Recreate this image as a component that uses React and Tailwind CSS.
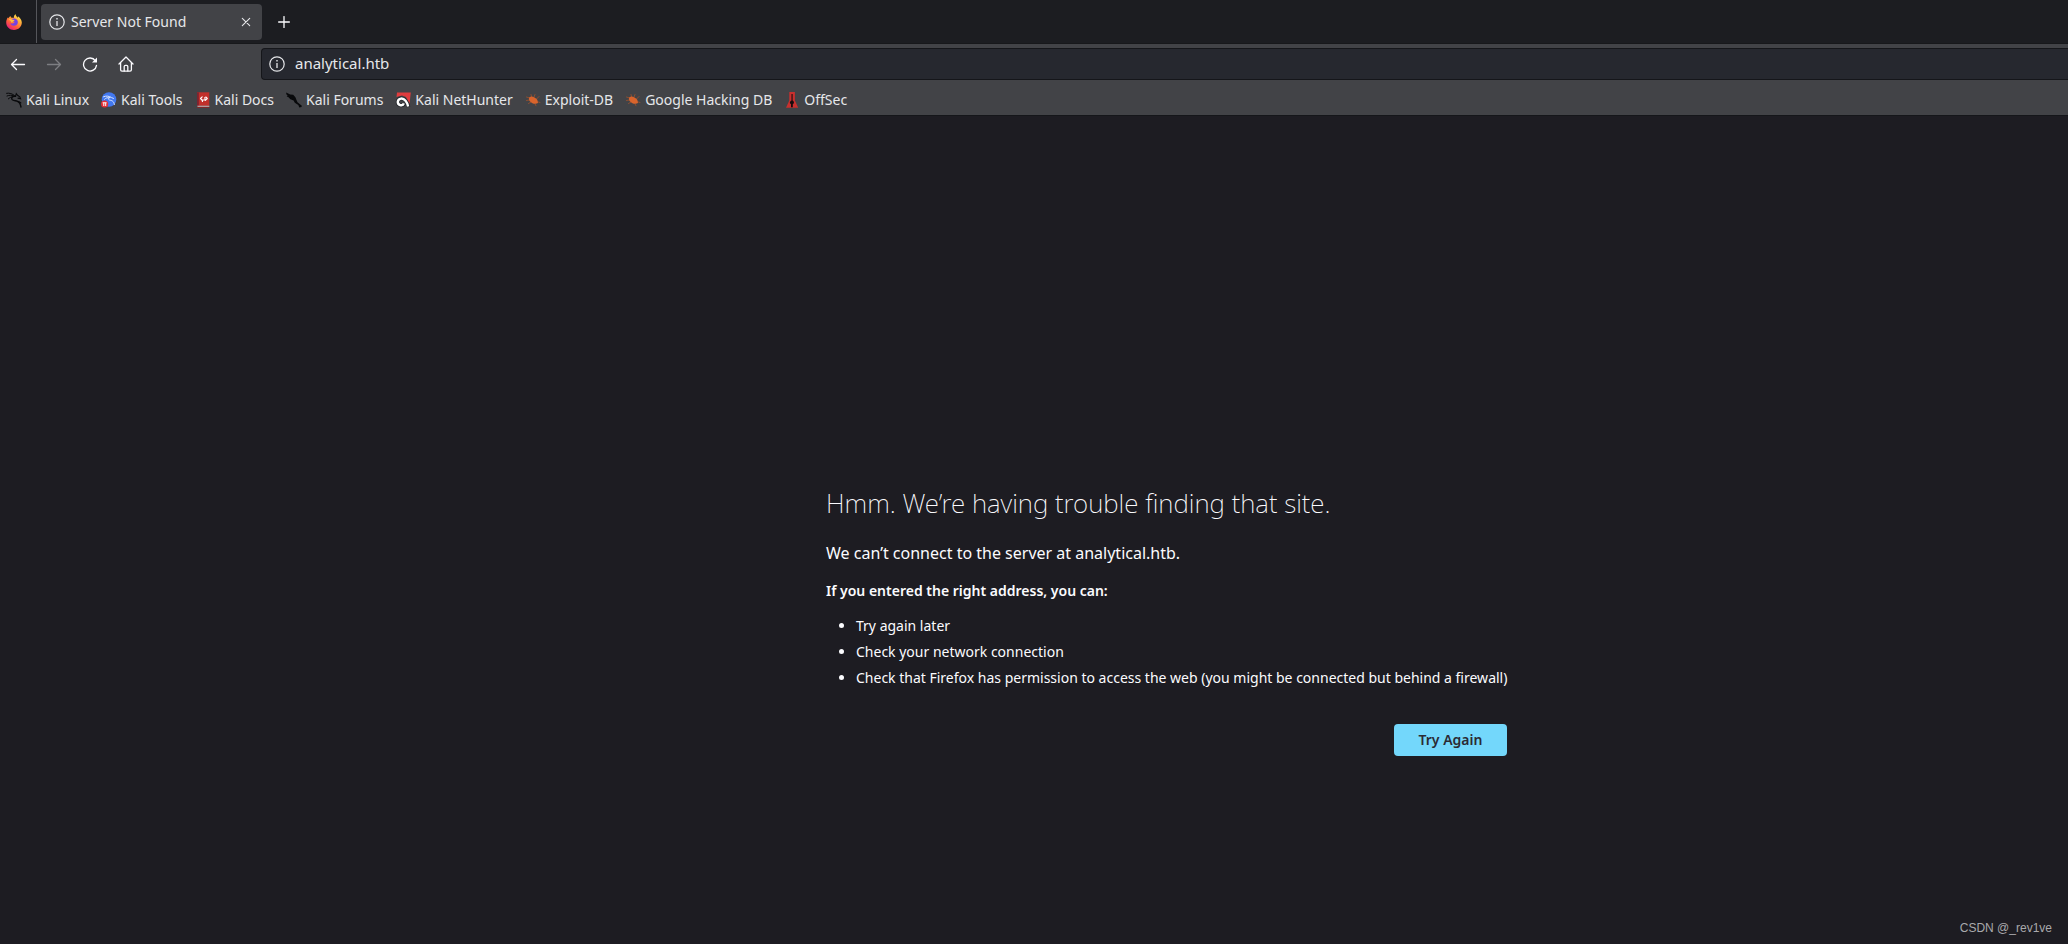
import React from 'react';

const FirefoxIcon = () => (
    <svg viewBox="0 0 16 16" className="h-4 w-4 shrink-0" aria-hidden="true">
        <defs>
            <linearGradient id="flame" x1="0.85" y1="0.05" x2="0.2" y2="1">
                <stop offset="0" stopColor="#fff44f" />
                <stop offset="0.35" stopColor="#ffa63a" />
                <stop offset="0.65" stopColor="#ff5b3c" />
                <stop offset="1" stopColor="#e31587" />
            </linearGradient>
        </defs>
        <path fill="url(#flame)" d="M9.500 0c.1 1.600 1 2.200 1.700 3 .3.300.5.600.7.900V2.200c2.300 1.400 3.700 3.600 3.900 6.100.2 4.300-3.400 7.700-7.800 7.700C3.600 16 .2 12.600.2 8.500c0-2.100.6-3.900 1.900-5.300.1.500.2.800.5 1.100C2.900 3.300 3.600 2.600 4.500 2c0 .9.400 1.500 1 1.800.9-.1 1.700 0 2.300.2C7.700 2.500 8.300 1.100 9.500 0z" />
        <path fill="#7542e5" d="M4.600 7.400c.3-2 2-3.200 4-2.900 2.200.3 3.500 2.200 3.200 4.300-.3 2-2 3.200-4.100 3-1.700-.1-3-1.100-3.200-2.600.9.500 2.300.4 3.300-.3l.9-.9c-.9-.6-2.200-.9-4.100-.6z" />
        <path fill="#ffbd3a" d="M2.600 5.400c1.300-.8 3.200-.6 4.100.3l1.900.4c-.2.900-1.300 1-1.700 1.700-.4.600-1 .8-1.700.6.100-1-.9-2-2.600-3z" />
    </svg>
);

const InfoIcon = () => (
    <svg viewBox="0 0 16 16" className="h-4 w-4 shrink-0" fill="none" stroke="currentColor" aria-hidden="true">
        <circle cx="8" cy="8" r="7.200" strokeWidth="1.200" />
        <path d="M8 7v5" strokeWidth="1.300" />
        <path d="M8 4v1.500" strokeWidth="1.400" />
    </svg>
);

const BackIcon = () => (
    <svg viewBox="0 0 16 16" className="h-4 w-4" fill="none" stroke="currentColor" strokeWidth="1.300" strokeLinecap="round" strokeLinejoin="round" aria-hidden="true">
        <path d="M14.500 8.500h-13M6.500 3.500l-5 5 5 5" />
    </svg>
);

const ForwardIcon = () => (
    <svg viewBox="0 0 16 16" className="h-4 w-4" fill="none" stroke="currentColor" strokeWidth="1.300" strokeLinecap="round" strokeLinejoin="round" aria-hidden="true">
        <path d="M1.500 8.500h13M9.500 3.500l5 5-5 5" />
    </svg>
);

const ReloadIcon = () => (
    <svg viewBox="0 0 16 16" className="h-4 w-4" fill="none" stroke="currentColor" strokeWidth="1.300" strokeLinecap="round" aria-hidden="true">
        <path d="M13.400 4.800A6.500 6.500 0 1 0 14.500 9.300" />
        <path d="M15 1.500v5h-5z" fill="currentColor" stroke="none" />
    </svg>
);

const HomeIcon = () => (
    <svg viewBox="0 0 16 16" className="h-4 w-4" fill="none" stroke="currentColor" strokeWidth="1.300" strokeLinecap="round" strokeLinejoin="round" aria-hidden="true">
        <path d="M1 8l7-7 7 7" />
        <path d="M2.600 6.600v7.200c0 .9.500 1.400 1.400 1.400h8c.9 0 1.400-.5 1.400-1.400V6.600" />
        <path d="M6.200 15v-4.500c0-.8.500-1.200 1.200-1.200h1.200c.7 0 1.200.4 1.200 1.200V15" />
    </svg>
);

const CloseIcon = () => (
    <svg viewBox="0 0 10 10" className="h-[10px] w-[10px]" stroke="currentColor" strokeWidth="1.100" strokeLinecap="round" aria-hidden="true">
        <path d="M1.300 1.300l7.400 7.400M8.700 1.300L1.300 8.700" />
    </svg>
);

const PlusIcon = () => (
    <svg viewBox="0 0 12 12" className="h-3 w-3" stroke="currentColor" strokeWidth="1.300" strokeLinecap="round" aria-hidden="true">
        <path d="M6 .6v10.800M.6 6h10.800" />
    </svg>
);

const DragonIcon = () => (
    <svg viewBox="0 0 16 16" className="h-4 w-4 shrink-0" fill="none" stroke="#08090b" strokeLinecap="round" aria-hidden="true">
        <path strokeWidth="1" d="M.6 1.300C3.600.8 6.300 1.600 8.500 3.600M1 4c2.200-.9 4.500-1.100 6.500-.2M2.300 6.900C3.800 5.600 5 5 6 5" />
        <path strokeWidth="1.400" d="M9.500 4.300C6.500 3.800 5 5.600 6 7.300c1.100 1.600 3.500 1.200 5.600 2 1.800.7 2.800 2.500 3.400 5.700" />
        <path strokeWidth="1.100" d="M9.500 4.300l.8-2.600 1.500 1.800 2 1.300.8 2-2.600-.7M12 9.600c1 .2 2 .6 2.900 1.400" />
    </svg>
);

const ToolsIcon = () => (
    <svg viewBox="0 0 16 16" className="h-4 w-4 shrink-0" fill="none" aria-hidden="true">
        <circle cx="8" cy="7.500" r="7.300" fill="#4278ef" />
        <path stroke="#dbe6ff" strokeLinecap="round" strokeWidth="1" d="M2.500 4.800c2.800-1.300 5.500-.8 8 .8l2 .8M3.500 7.300c1.500-1.500 3-1.900 4.800-1.500M8.900 5.300c-1.900.5-2 2-.5 2.700 2.600.7 4.200.7 5 4.500" />
        <circle cx="3.600" cy="12" r="3.600" fill="#e32f36" />
        <path stroke="#fff" strokeWidth="1" d="M1.600 10.800h4M2.800 10.800v3.200M4.700 10.800v3.200" />
    </svg>
);

const DocsIcon = () => (
    <svg viewBox="0 0 16 16" className="h-4 w-4 shrink-0" fill="none" aria-hidden="true">
        <path fill="#c1302b" d="M2 .3h12.300v13.500H2z" />
        <path fill="#7c2430" d="M2 .3h1.800v13.500H2z" />
        <path fill="#d7d8dc" d="M2.500 13.800h11.800v1H2.500z" />
        <path fill="#8e2423" d="M2 14.800h12.300v1H2z" />
        <path stroke="#fff" strokeWidth="1.100" strokeLinecap="round" strokeLinejoin="round" d="M7.200 4.800L5.500 6.500l1.500 1.500h3.200M7.500 9.500l-.4-1.500M10.200 8l-.4-2.500M10.800 5l1.500 1.500-1.900 1.800" />
    </svg>
);

const ForumsIcon = () => (
    <svg viewBox="0 0 16 16" className="h-4 w-4 shrink-0" fill="#08090b" aria-hidden="true">
        <path d="M.2.6l4 2 3 .1 2.200 2.600 1.200 3 .9 2 4.300 3.400-.3 1.200-2.200.6-1-2.500-3.500-2.200-1.200-2.200-3.200-1.400L2.200 5l-1.500-.6.900-.8L.3 2.200z" />
    </svg>
);

const NetHunterIcon = () => (
    <svg viewBox="0 0 16 16" className="h-4 w-4 shrink-0" fill="none" aria-hidden="true">
        <path fill="#df3c3e" d="M2 .5h13.800L14.500 12 11 5 7 3.500 1.500 5z" />
        <path stroke="#24272c" strokeWidth="4" d="M13.300 15C12.500 10 9.500 6.200 6 6.600 2 7.200 1.800 12 5 13c2 .5 3.400-.3 3.800-1.600" />
        <path stroke="#fff" strokeWidth="2.400" d="M13.100 14.500C12.300 10 9.500 6.200 6 6.600 2 7.200 1.800 12 5 13c2 .5 3.400-.3 3.800-1.600" />
    </svg>
);

const BugIcon = () => (
    <svg viewBox="0 0 16 16" className="h-4 w-4 shrink-0" fill="none" aria-hidden="true">
        <path stroke="#8c4f32" strokeWidth="1" strokeLinecap="round" d="M1.500 5l3 1M6 2.500l.5 2M10 2.500L9 5M1.500 8.500l3-.5M3.500 11.500L6 10M14 4.500L11.500 7M11 13.800l-1-2M15 10.500l-2.500-.8" />
        <path fill="#d9642c" d="M4.300 5.300c1.500-1 3.200-.9 4.700 0 1.900.8 3.100 1.900 3.500 3.300l.5 2.500c-1.700.9-3.900.9-5.600.1C5.300 10.200 4 8.500 3.900 7z" />
    </svg>
);

const OffSecIcon = () => (
    <svg viewBox="0 0 16 16" className="h-4 w-4 shrink-0" fill="none" aria-hidden="true">
        <path fill="#c8302e" d="M5.300 0h5.600v8.500l3.300 7.200H2l3.300-7.200z" />
        <path fill="#170c0e" d="M7.500 2h1.100v6.600c1.200.6 1.600 1.600 1.200 2.700l-1 1v3H7v-3l-1-1c-.4-1.100.2-2.100 1.500-2.700z" />
    </svg>
);

const bookmarks = [
    { label: 'Kali Linux', icon: DragonIcon },
    { label: 'Kali Tools', icon: ToolsIcon },
    { label: 'Kali Docs', icon: DocsIcon },
    { label: 'Kali Forums', icon: ForumsIcon },
    { label: 'Kali NetHunter', icon: NetHunterIcon },
    { label: 'Exploit-DB', icon: BugIcon },
    { label: 'Google Hacking DB', icon: BugIcon },
    { label: 'OffSec', icon: OffSecIcon },
];

const App = () => {
    return (
        <div className="relative flex min-h-screen flex-col overflow-hidden bg-[#1d1c22] font-['Noto_Sans',sans-serif] text-sm text-[#fbfbfe]">
            {/* Tab strip */}
            <div className="flex h-11 items-center border-b border-[#17181b] bg-[#1c1d21]">
                <div className="flex h-full w-[37px] items-center border-r border-[#55565b] pl-[6px]">
                    <FirefoxIcon />
                </div>
                <div className="ml-1 flex h-9 w-[221px] items-center gap-[6px] rounded bg-[#424347] pr-[11px] pl-2 text-[#e6e7ea]">
                    <InfoIcon />
                    <span className="flex-1 truncate">Server Not Found</span>
                    <button aria-label="Close tab">
                        <CloseIcon />
                    </button>
                </div>
                <button className="ml-4 text-[#fbfbfe]" aria-label="New tab">
                    <PlusIcon />
                </button>
            </div>

            {/* Navigation */}
            <div className="flex h-10 items-center bg-[#424347]">
                <div className="flex w-[261px] shrink-0 items-center gap-5 pl-[10px] text-[#fbfbfe]">
                    <button aria-label="Back"><BackIcon /></button>
                    <button aria-label="Forward" disabled className="text-[#7d7e82]"><ForwardIcon /></button>
                    <button aria-label="Reload"><ReloadIcon /></button>
                    <button aria-label="Home"><HomeIcon /></button>
                </div>
                <div className="flex h-8 flex-1 items-center gap-[10px] rounded-l border border-r-0 border-[#15161a] bg-[#26282f] pl-[7px] text-[#e6e7ea]">
                    <InfoIcon />
                    <input
                        type="text"
                        aria-label="Address"
                        defaultValue="analytical.htb"
                        className="min-w-0 flex-1 bg-transparent text-[15px] outline-none"
                    />
                </div>
            </div>

            {/* Bookmarks bar */}
            <div className="flex h-8 items-center gap-3 border-b border-[#15161a] bg-[#424347] pl-[6px] text-[#e6e7ea]">
                {bookmarks.map(({ label, icon: Icon }) => (
                    <a key={label} href="#" className="flex items-center gap-1 whitespace-nowrap">
                        <Icon />
                        {label}
                    </a>
                ))}
            </div>

            {/* Error page */}
            <main className="flex flex-1 flex-col items-center justify-center pt-[181px] pl-[268px]">
                <div className="w-full max-w-[684px]">
                    <h1 className="mb-5 text-[26px] leading-9 font-extralight">Hmm. We’re having trouble finding that site.</h1>
                    <p className="mb-[14px] text-base leading-6">We can’t connect to the server at analytical.htb.</p>
                    <p className="mb-[10px] leading-6 font-semibold">If you entered the right address, you can:</p>
                    <ul className="list-disc pl-[30px] leading-[26px] whitespace-nowrap">
                        <li>Try again later</li>
                        <li>Check your network connection</li>
                        <li>Check that Firefox has permission to access the web (you might be connected but behind a firewall)</li>
                    </ul>
                    <div className="mt-[33px] mr-[3px] flex justify-end">
                        <button className="h-8 w-[113px] rounded bg-[#73d7fb] font-semibold text-[#2b2a33]">Try Again</button>
                    </div>
                </div>
            </main>

            <span className="absolute right-4 bottom-2 font-['Liberation_Sans',sans-serif] text-xs leading-4 text-[#a9a9ac]">CSDN @_rev1ve</span>
        </div>
    );
};

export default App;
